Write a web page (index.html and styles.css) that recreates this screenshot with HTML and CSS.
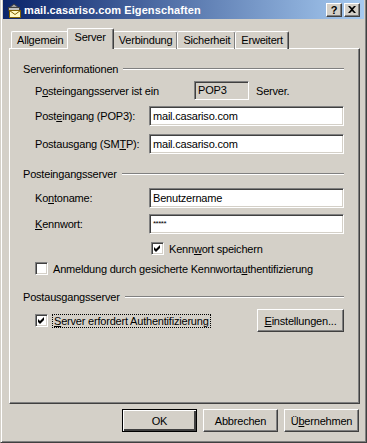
FILE: index.html
```html
<!DOCTYPE html>
<html lang="de">
<head>
    <meta charset="UTF-8">
    <title>mail.casariso.com Eigenschaften</title>
    <link rel="stylesheet" href="styles.css">
</head>
<body>
    <div class="window">
        <div class="titlebar">
            <svg class="title-icon" width="16" height="16" viewBox="0 0 16 16">
                <path d="M2 7 L8 2 L14 7 Z" fill="#a0a0a0" stroke="#404040" stroke-width="1"/>
                <rect x="2.5" y="5.5" width="11" height="3" fill="#c0c0c0" stroke="#404040"/>
                <rect x="3.5" y="8.5" width="11" height="7" fill="#fff8c0" stroke="#806000"/>
                <path d="M3.5 8.5 L9 12.5 L14.5 8.5" fill="none" stroke="#806000"/>
            </svg>
            <span class="title-text">mail.casariso.com Eigenschaften</span>
            <div class="title-buttons">
                <span class="cap-btn">?</span>
                <span class="cap-btn close">
                    <svg width="8" height="7" viewBox="0 0 8 7"><path d="M0 0 L2 0 L4 2 L6 0 L8 0 L5 3.5 L8 7 L6 7 L4 5 L2 7 L0 7 L3 3.5 Z" fill="#000"/></svg>
                </span>
            </div>
        </div>

        <div class="content">
            <div class="tabs">
                <span class="tab">Allgemein</span>
                <span class="tab active">Server</span>
                <span class="tab">Verbindung</span>
                <span class="tab">Sicherheit</span>
                <span class="tab">Erweitert</span>
            </div>

            <div class="panel">
                <div class="group-head"><span>Serverinformationen</span><i></i></div>
                <div class="row server-type">
                    <label class="field-label">P<u>o</u>steingangsserver ist ein</label>
                    <span class="readonly">POP3</span>
                    <span class="after">Server.</span>
                </div>
                <div class="row">
                    <label class="field-label">Post<u>e</u>ingang (POP3):</label>
                    <span class="input">mail.casariso.com</span>
                </div>
                <div class="row gap7">
                    <label class="field-label">Postausgang (SM<u>T</u>P):</label>
                    <span class="input">mail.casariso.com</span>
                </div>

                <div class="group-head second"><span>Posteingangsserver</span><i></i></div>
                <div class="row gap7">
                    <label class="field-label">Ko<u>n</u>toname:</label>
                    <span class="input">Benutzername</span>
                </div>
                <div class="row">
                    <label class="field-label"><u>K</u>ennwort:</label>
                    <span class="input password">*****</span>
                </div>
                <div class="check-row save">
                    <span class="checkbox checked"></span>
                    <span>Kenn<u>w</u>ort speichern</span>
                </div>
                <div class="check-row spa">
                    <span class="checkbox"></span>
                    <span>Anmeldung durch gesicherte Kennworta<u>u</u>thentifizierung</span>
                </div>

                <div class="group-head third"><span>Postausgangsserver</span><i></i></div>
                <div class="auth-row">
                    <div class="check-row">
                        <span class="checkbox checked"></span>
                        <span class="focus"><u>S</u>erver erfordert Authentifizierung</span>
                    </div>
                    <button class="btn settings"><u>E</u>instellungen...</button>
                </div>
            </div>

            <div class="actions">
                <button class="btn default">OK</button>
                <button class="btn">Abbrechen</button>
                <button class="btn">Ü<u>b</u>ernehmen</button>
            </div>
        </div>
    </div>
</body>
</html>
```

FILE: styles.css
```css
* {
    box-sizing: border-box;
}
body {
    margin: 0;
    background-color: #d4d0c8;
    font-family: "Liberation Sans", Arial, sans-serif;
    font-size: 11px;
    letter-spacing: -0.2px;
    color: #000;
}
u {
    text-decoration: underline;
    text-underline-offset: 1px;
}
.window {
    width: 367px;
    height: 443px;
    background-color: #d4d0c8;
    border-left: 1px solid #d4d0c8;
    border-right: 1px solid #404040;
    border-bottom: 1px solid #404040;
    box-shadow: inset 1px 0 0 #fff, inset -1px -1px 0 #808080;
    padding: 0 2px 2px 2px;
    display: flex;
    flex-direction: column;
}
.titlebar {
    height: 19px;
    display: flex;
    align-items: center;
    padding: 0 4px 0 3px;
    background: linear-gradient(to right, #0a246a, #a6caf0);
    color: #fff;
}
.title-icon {
    flex: none;
    margin-right: 2px;
}
.title-text {
    font-weight: bold;
    font-size: 11px;
    letter-spacing: 0.1px;
    flex: 1;
}
.title-buttons {
    display: flex;
    gap: 2px;
}
.cap-btn {
    width: 16px;
    height: 14px;
    background-color: #d4d0c8;
    color: #000;
    font-weight: bold;
    font-size: 11px;
    line-height: 12px;
    text-align: center;
    border: 1px solid;
    border-color: #fff #404040 #404040 #fff;
    box-shadow: inset -1px -1px 0 #808080;
    display: flex;
    justify-content: center;
    align-items: center;
}
.content {
    flex: 1;
    display: flex;
    flex-direction: column;
    padding: 10px 4px 0 6px;
}
.tabs {
    display: flex;
    align-items: flex-end;
    padding-left: 2px;
    height: 20px;
    position: relative;
    z-index: 1;
    margin-bottom: -1px;
}
.tab {
    height: 18px;
    padding: 2px 5px 0 5px;
    border: 1px solid;
    border-color: #fff #404040 transparent #fff;
    border-bottom: none;
    border-radius: 2px 2px 0 0;
    box-shadow: inset -1px 0 0 #808080;
    margin-right: -1px;
    white-space: nowrap;
}
.tab.active {
    height: 21px;
    padding: 2px 7px 0 7px;
    margin: 0 -1px 0 -2px;
    background-color: #d4d0c8;
    position: relative;
    z-index: 2;
}
.panel {
    height: 356px;
    border: 1px solid;
    border-color: #fff #404040 #404040 #fff;
    box-shadow: inset -1px -1px 0 #808080;
    padding: 8px 15px 0 13px;
}
.group-head {
    display: flex;
    align-items: center;
    height: 13px;
    margin-top: 5px;
}
.group-head i {
    flex: 1;
    height: 2px;
    margin-left: 5px;
    border-top: 1px solid #808080;
    border-bottom: 1px solid #fff;
}
.group-head.second {
    margin-top: 13px;
}
.group-head.third {
    margin-top: 15px;
}
.row {
    display: flex;
    align-items: center;
    margin: 6px 0 0 12px;
    height: 20px;
}
.row.gap7 {
    margin-top: 8px;
}
.row.server-type {
    height: 19px;
    margin-top: 6px;
}
.field-label {
    width: 114px;
    flex: none;
    white-space: nowrap;
}
.server-type .field-label {
    width: 159px;
}
.readonly {
    width: 55px;
    height: 19px;
    border: 1px solid;
    border-color: #808080 #fff #fff #808080;
    box-shadow: inset 1px 1px 0 #404040;
    padding: 2px 0 0 3px;
}
.after {
    margin-left: 7px;
}
.input {
    flex: 1;
    height: 20px;
    background-color: #fff;
    border: 1px solid;
    border-color: #808080 #fff #fff #808080;
    box-shadow: inset 1px 1px 0 #404040, inset -1px -1px 0 #d4d0c8;
    padding: 3px 0 0 3px;
    white-space: nowrap;
}
.password {
    font-size: 8px;
    padding-top: 4px;
    letter-spacing: -0.5px;
}
.checkbox {
    width: 13px;
    height: 13px;
    flex: none;
    background-color: #fff;
    border: 1px solid;
    border-color: #808080 #fff #fff #808080;
    box-shadow: inset 1px 1px 0 #404040, inset -1px -1px 0 #d4d0c8;
    margin-right: 5px;
}
.checkbox.checked {
    background-image: url("data:image/svg+xml,%3Csvg xmlns='http://www.w3.org/2000/svg' width='11' height='11'%3E%3Cpath d='M2 4 L4 6 L8 2 L8 5 L4 9 L2 7 Z' fill='black'/%3E%3C/svg%3E");
    background-position: center;
    background-repeat: no-repeat;
}
.check-row {
    display: flex;
    align-items: center;
    height: 13px;
}
.check-row.save {
    margin: 8px 0 0 128px;
}
.check-row.spa {
    margin: 7px 0 0 12px;
}
.auth-row {
    display: flex;
    align-items: center;
    justify-content: space-between;
    margin: 6px 0 0 12px;
}
.focus {
    outline: 1px dotted #000;
    padding: 0 1px;
}
.btn {
    font-family: inherit;
    font-size: 11px;
    letter-spacing: -0.2px;
    color: #000;
    background-color: #d4d0c8;
    height: 23px;
    width: 75px;
    border: 1px solid;
    border-color: #fff #404040 #404040 #fff;
    box-shadow: inset -1px -1px 0 #808080;
    padding: 0;
}
.btn.settings {
    width: 87px;
}
.btn.default {
    border: 1px solid #000;
    box-shadow: inset 1px 1px 0 #fff, inset -2px -2px 0 #404040, inset -1px -1px 0 #808080;
}
.actions {
    display: flex;
    justify-content: flex-end;
    gap: 6px;
    margin-top: 5px;
    padding-right: 1px;
}
```
